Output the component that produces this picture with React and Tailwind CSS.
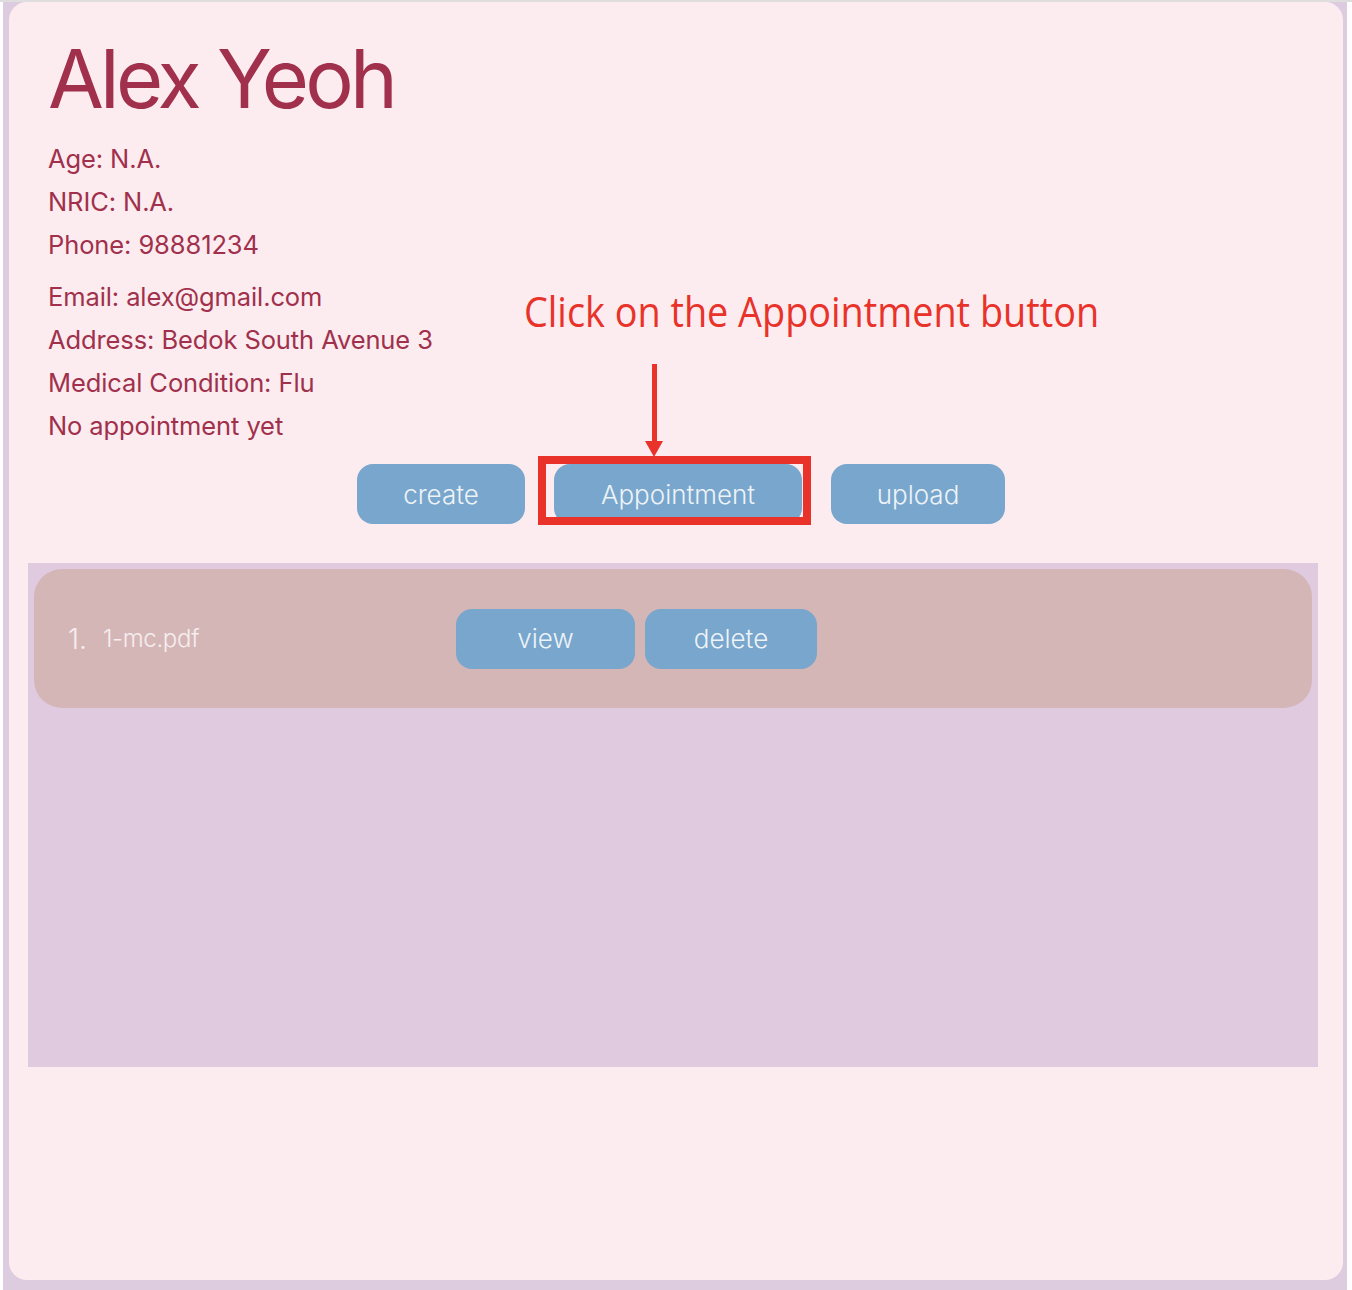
import React from "react";

function Btn({ w, children }) {
  return (
    <div
      className="h-[60px] rounded-[16px] bg-[#78a6cc] flex items-center justify-center text-[26px] font-light text-[#eef3f8]"
      style={{ width: w }}
    >
      {children}
    </div>
  );
}

export default function App() {
  const lines1 = ["Age: N.A.", "NRIC: N.A.", "Phone: 98881234"];
  const lines2 = [
    "Email: alex@gmail.com",
    "Address: Bedok South Avenue 3",
    "Medical Condition: Flu",
    "No appointment yet",
  ];
  return (
    <div
      className="w-[1352px] h-[1290px] bg-white border-t-2 border-[#dedede] pl-[3px] pr-[5px] relative overflow-hidden"
      style={{ fontFamily: "Inter, 'Noto Sans', sans-serif" }}
    >
      <div className="h-full bg-[#ddcbe0] pl-[6px] pr-[4px] pb-[10px]">
        <div className="h-full rounded-[18px] bg-[#fcecef] pt-[37px] flex flex-col">
          <div className="pl-[39px] text-[#a0304c]">
            <div className="text-[81px] leading-none tracking-[-3.8px]">Alex Yeoh</div>
            <div className="mt-[17px] text-[25.5px] leading-[43px] tracking-[-0.1px]">
              {lines1.map((l) => (
                <div key={l}>{l}</div>
              ))}
              <div className="h-[9px]" />
              {lines2.map((l) => (
                <div key={l}>{l}</div>
              ))}
            </div>
          </div>
          <div className="mt-[17px] flex justify-center gap-[29px] pl-[10px]">
            <Btn w={168}>create</Btn>
            <Btn w={248}>Appointment</Btn>
            <Btn w={174}>upload</Btn>
          </div>
          <div className="mt-[39px] ml-[19px] w-[1290px] h-[504px] bg-[#dfcadf] p-[6px]">
            <div className="h-[139px] rounded-[28px] bg-[#d5b6b7] flex items-center pl-[34px]">
              <div className="w-[388px] flex items-center text-[#f6eef0]">
                <span className="text-[28px] font-light">1.</span>
                <span className="ml-[16px] text-[24px] font-light tracking-[-0.3px]">1-mc.pdf</span>
              </div>
              <div className="flex gap-[10px]">
                <Btn w={179}>view</Btn>
                <Btn w={172}>delete</Btn>
              </div>
            </div>
          </div>
        </div>
      </div>

      {/* annotation overlay */}
      <div
        className="absolute left-[524px] top-[281px] text-[42px] leading-[56px] text-[#e8322a] whitespace-nowrap origin-left scale-x-[0.9]"
        style={{ fontFamily: "'Open Sans', 'Noto Sans', sans-serif" }}
      >
        Click on the Appointment button
      </div>
      <div className="absolute left-[652px] top-[362px] w-[5px] h-[80px] bg-[#e8322a]" />
      <svg className="absolute left-[645px] top-[439px]" width="18" height="16" viewBox="0 0 18 16">
        <polygon points="0,0 18,0 9,16" fill="#e8322a" />
      </svg>
      <div className="absolute left-[538px] top-[454px] w-[273px] h-[69px] border-[8px] border-[#e8322a]" />
    </div>
  );
}
